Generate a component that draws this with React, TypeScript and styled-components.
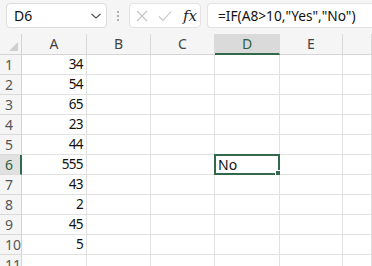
import React from "react";
import styled, { createGlobalStyle } from "styled-components";

const Global = createGlobalStyle`
  html, body { margin: 0; padding: 0; background: #f5f5f5; overflow: hidden; }
  body { font-family: "Noto Sans", "Open Sans", sans-serif; }
`;

const Page = styled.div`
  width: 372px;
  height: 266px;
  overflow: hidden;
  background: #f5f5f5;
`;

const Toolbar = styled.div`
  display: flex;
  align-items: center;
  height: 34px;
  padding: 0 0 3px 6px;
  box-sizing: border-box;
`;

const NameBox = styled.div`
  width: 101px;
  height: 25px;
  box-sizing: border-box;
  background: #fff;
  border: 1px solid #dcdcdc;
  border-radius: 4px;
  display: flex;
  align-items: center;
  justify-content: space-between;
  padding: 0 4px 0 7px;
  font-size: 14px;
  color: #111;
`;

const Dots = styled.div`
  width: 22px;
  display: flex;
  flex-direction: column;
  align-items: center;
  gap: 2px;
  span { width: 2px; height: 2px; background: #9a9a9a; border-radius: 1px; }
`;

const IconBox = styled.div`
  width: 72px;
  height: 25px;
  box-sizing: border-box;
  background: #fff;
  border: 1px solid #e2e2e2;
  border-radius: 4px;
  display: flex;
  align-items: center;
  padding-left: 6px;
  gap: 10px;
`;

const Fx = styled.span`
  font-family: "DejaVu Serif", "Liberation Serif", serif;
  font-style: italic;
  font-size: 15px;
  color: #222;
  margin-left: 1px;
`;

const FormulaBox = styled.div`
  flex: 1;
  margin-left: 6px;
  height: 25px;
  box-sizing: border-box;
  background: #fff;
  border: 1px solid #e2e2e2;
  border-right: none;
  border-radius: 4px 0 0 4px;
  display: flex;
  align-items: center;
  padding-left: 10px;
  font-size: 13.7px;
  color: #111;
  white-space: nowrap;
`;

const Grid = styled.div`
  display: grid;
  grid-template-columns: 22px 65px 64px 64px 65px 63px 1fr;
  grid-template-rows: 21px repeat(11, 20px);
`;

const Corner = styled.div`
  border-right: 1px solid #d4d4d4;
  border-bottom: 1px solid #d4d4d4;
  display: flex;
  align-items: flex-end;
  justify-content: flex-end;
  padding: 0 3px 3px 0;
`;

const ColHead = styled.div<{ $active?: boolean }>`
  background: ${(p) => (p.$active ? "#dadada" : "#f5f5f5")};
  border-right: 1px solid #dadada;
  border-bottom: ${(p) => (p.$active ? "2px solid #32694c" : "1px solid #d4d4d4")};
  color: ${(p) => (p.$active ? "#2f5f45" : "#444")};
  font-size: 14px;
  display: flex;
  align-items: center;
  justify-content: center;
  line-height: 1;
  padding-top: ${(p) => (p.$active ? "1px" : "0")};
`;

const RowHead = styled.div<{ $active?: boolean }>`
  background: ${(p) => (p.$active ? "#e1e1e1" : "#f5f5f5")};
  border-right: ${(p) => (p.$active ? "2px solid #32694c" : "1px solid #d4d4d4")};
  border-bottom: 1px solid #dadada;
  color: ${(p) => (p.$active ? "#2f5f45" : "#555")};
  font-size: 14px;
  display: flex;
  align-items: center;
  padding-left: 5px;
  line-height: 1;
`;

const Cell = styled.div<{ $num?: boolean }>`
  position: relative;
  background: #fff;
  border-right: 1px solid #e1e1e1;
  border-bottom: 1px solid #e1e1e1;
  font-size: 13.5px;
  letter-spacing: ${(p) => (p.$num ? "-0.6px" : "0")};
  color: #111;
  display: flex;
  align-items: center;
  justify-content: ${(p) => (p.$num ? "flex-end" : "flex-start")};
  padding: 0 3px;
  line-height: 1;
`;

const Selection = styled.div`
  position: absolute;
  left: -1px;
  top: -1px;
  right: -1px;
  bottom: -1px;
  border: 2px solid #32694c;
  pointer-events: none;
`;

const Handle = styled.div`
  position: absolute;
  right: -4px;
  bottom: -4px;
  width: 5px;
  height: 5px;
  background: #32694c;
  border: 1px solid #fff;
`;

const CellText = styled.span`
  position: relative;
  z-index: 1;
  font-size: 14px;
`;

const values = ["34", "54", "65", "23", "44", "555", "43", "2", "45", "5", ""];
const cols = ["A", "B", "C", "D", "E", ""];

export default function App() {
  return (
    <Page>
      <Global />
      <Toolbar>
        <NameBox>
          <span>D6</span>
          <svg width="12" height="8" viewBox="0 0 12 8">
            <path d="M1.5 2 L6 6 L10.5 2" fill="none" stroke="#555" strokeWidth="1.2" />
          </svg>
        </NameBox>
        <Dots>
          <span />
          <span />
          <span />
        </Dots>
        <IconBox>
          <svg width="12" height="12" viewBox="0 0 12 12">
            <path d="M1 1 L11 11 M11 1 L1 11" stroke="#c4c4c4" strokeWidth="1.1" fill="none" />
          </svg>
          <svg width="14" height="12" viewBox="0 0 14 12">
            <path d="M1 6.5 L5 10.5 L13 1.5" stroke="#c4c4c4" strokeWidth="1.1" fill="none" />
          </svg>
          <Fx>fx</Fx>
        </IconBox>
        <FormulaBox>=IF(A8&gt;10,"Yes","No")</FormulaBox>
      </Toolbar>
      <Grid>
        <Corner>
          <svg width="9" height="9" viewBox="0 0 9 9">
            <path d="M9 0 L9 9 L0 9 Z" fill="#cfcfcf" />
          </svg>
        </Corner>
        {cols.map((c) => (
          <ColHead key={c || "x"} $active={c === "D"}>
            {c}
          </ColHead>
        ))}
        {values.map((v, i) => (
          <React.Fragment key={i}>
            <RowHead $active={i === 5}>{i + 1}</RowHead>
            <Cell $num>{v}</Cell>
            <Cell />
            <Cell />
            <Cell>
              {i === 5 && (
                <>
                  <CellText>No</CellText>
                  <Selection>
                    <Handle />
                  </Selection>
                </>
              )}
            </Cell>
            <Cell />
            <Cell />
          </React.Fragment>
        ))}
      </Grid>
    </Page>
  );
}
